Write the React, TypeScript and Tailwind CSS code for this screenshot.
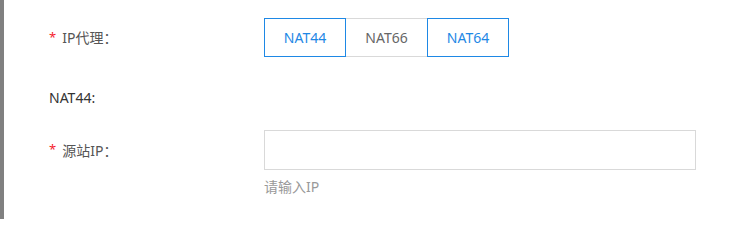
import { useState } from 'react';

const font = { fontFamily: '"Noto Sans", "Noto Sans CJK SC", sans-serif' };

function Label({ text, required }: { text: string; required?: boolean }) {
  return (
    <div className="flex w-[215px] items-center text-[14px] text-[#555]">
      {required && <span className="mr-[6px] text-[13px] text-[#f5222d]">*</span>}
      <span>{text}</span>
    </div>
  );
}

export default function App() {
  const [active] = useState(['NAT44', 'NAT64']);
  const options = ['NAT44', 'NAT66', 'NAT64'];

  return (
    <div className="flex h-[219px] w-[746px] overflow-hidden bg-white" style={font}>
      {/* page behind the modal */}
      <div className="w-[4px] shrink-0 bg-[#808080]" />

      <div className="flex flex-1 flex-col pl-[45px] pt-[18px]">
        {/* IP proxy */}
        <div className="flex items-center">
          <Label text="IP代理：" required />
          <div className="flex">
            {options.map((o) => {
              const on = active.includes(o);
              return (
                <button
                  key={o}
                  className={
                    on
                      ? 'h-[39px] w-[82px] border border-[#1e88e5] text-[14px] text-[#1e88e5]'
                      : 'h-[39px] w-[81px] border-y border-[#d9d9d9] text-[14px] text-[#666]'
                  }
                >
                  {o}
                </button>
              );
            })}
          </div>
        </div>

        <div className="mt-[30px] text-[14px] text-[#333]">NAT44:</div>

        {/* source ip */}
        <div className="mt-[22px] flex">
          <div className="flex h-[40px] items-center">
            <Label text="源站IP：" required />
          </div>
          <div className="flex flex-col">
            <input className="h-[40px] w-[432px] border border-[#d9d9d9] px-3 text-[14px] outline-none" />
            <div className="mt-[6px] text-[14px] text-[#999]">请输入IP</div>
          </div>
        </div>
      </div>
    </div>
  );
}
